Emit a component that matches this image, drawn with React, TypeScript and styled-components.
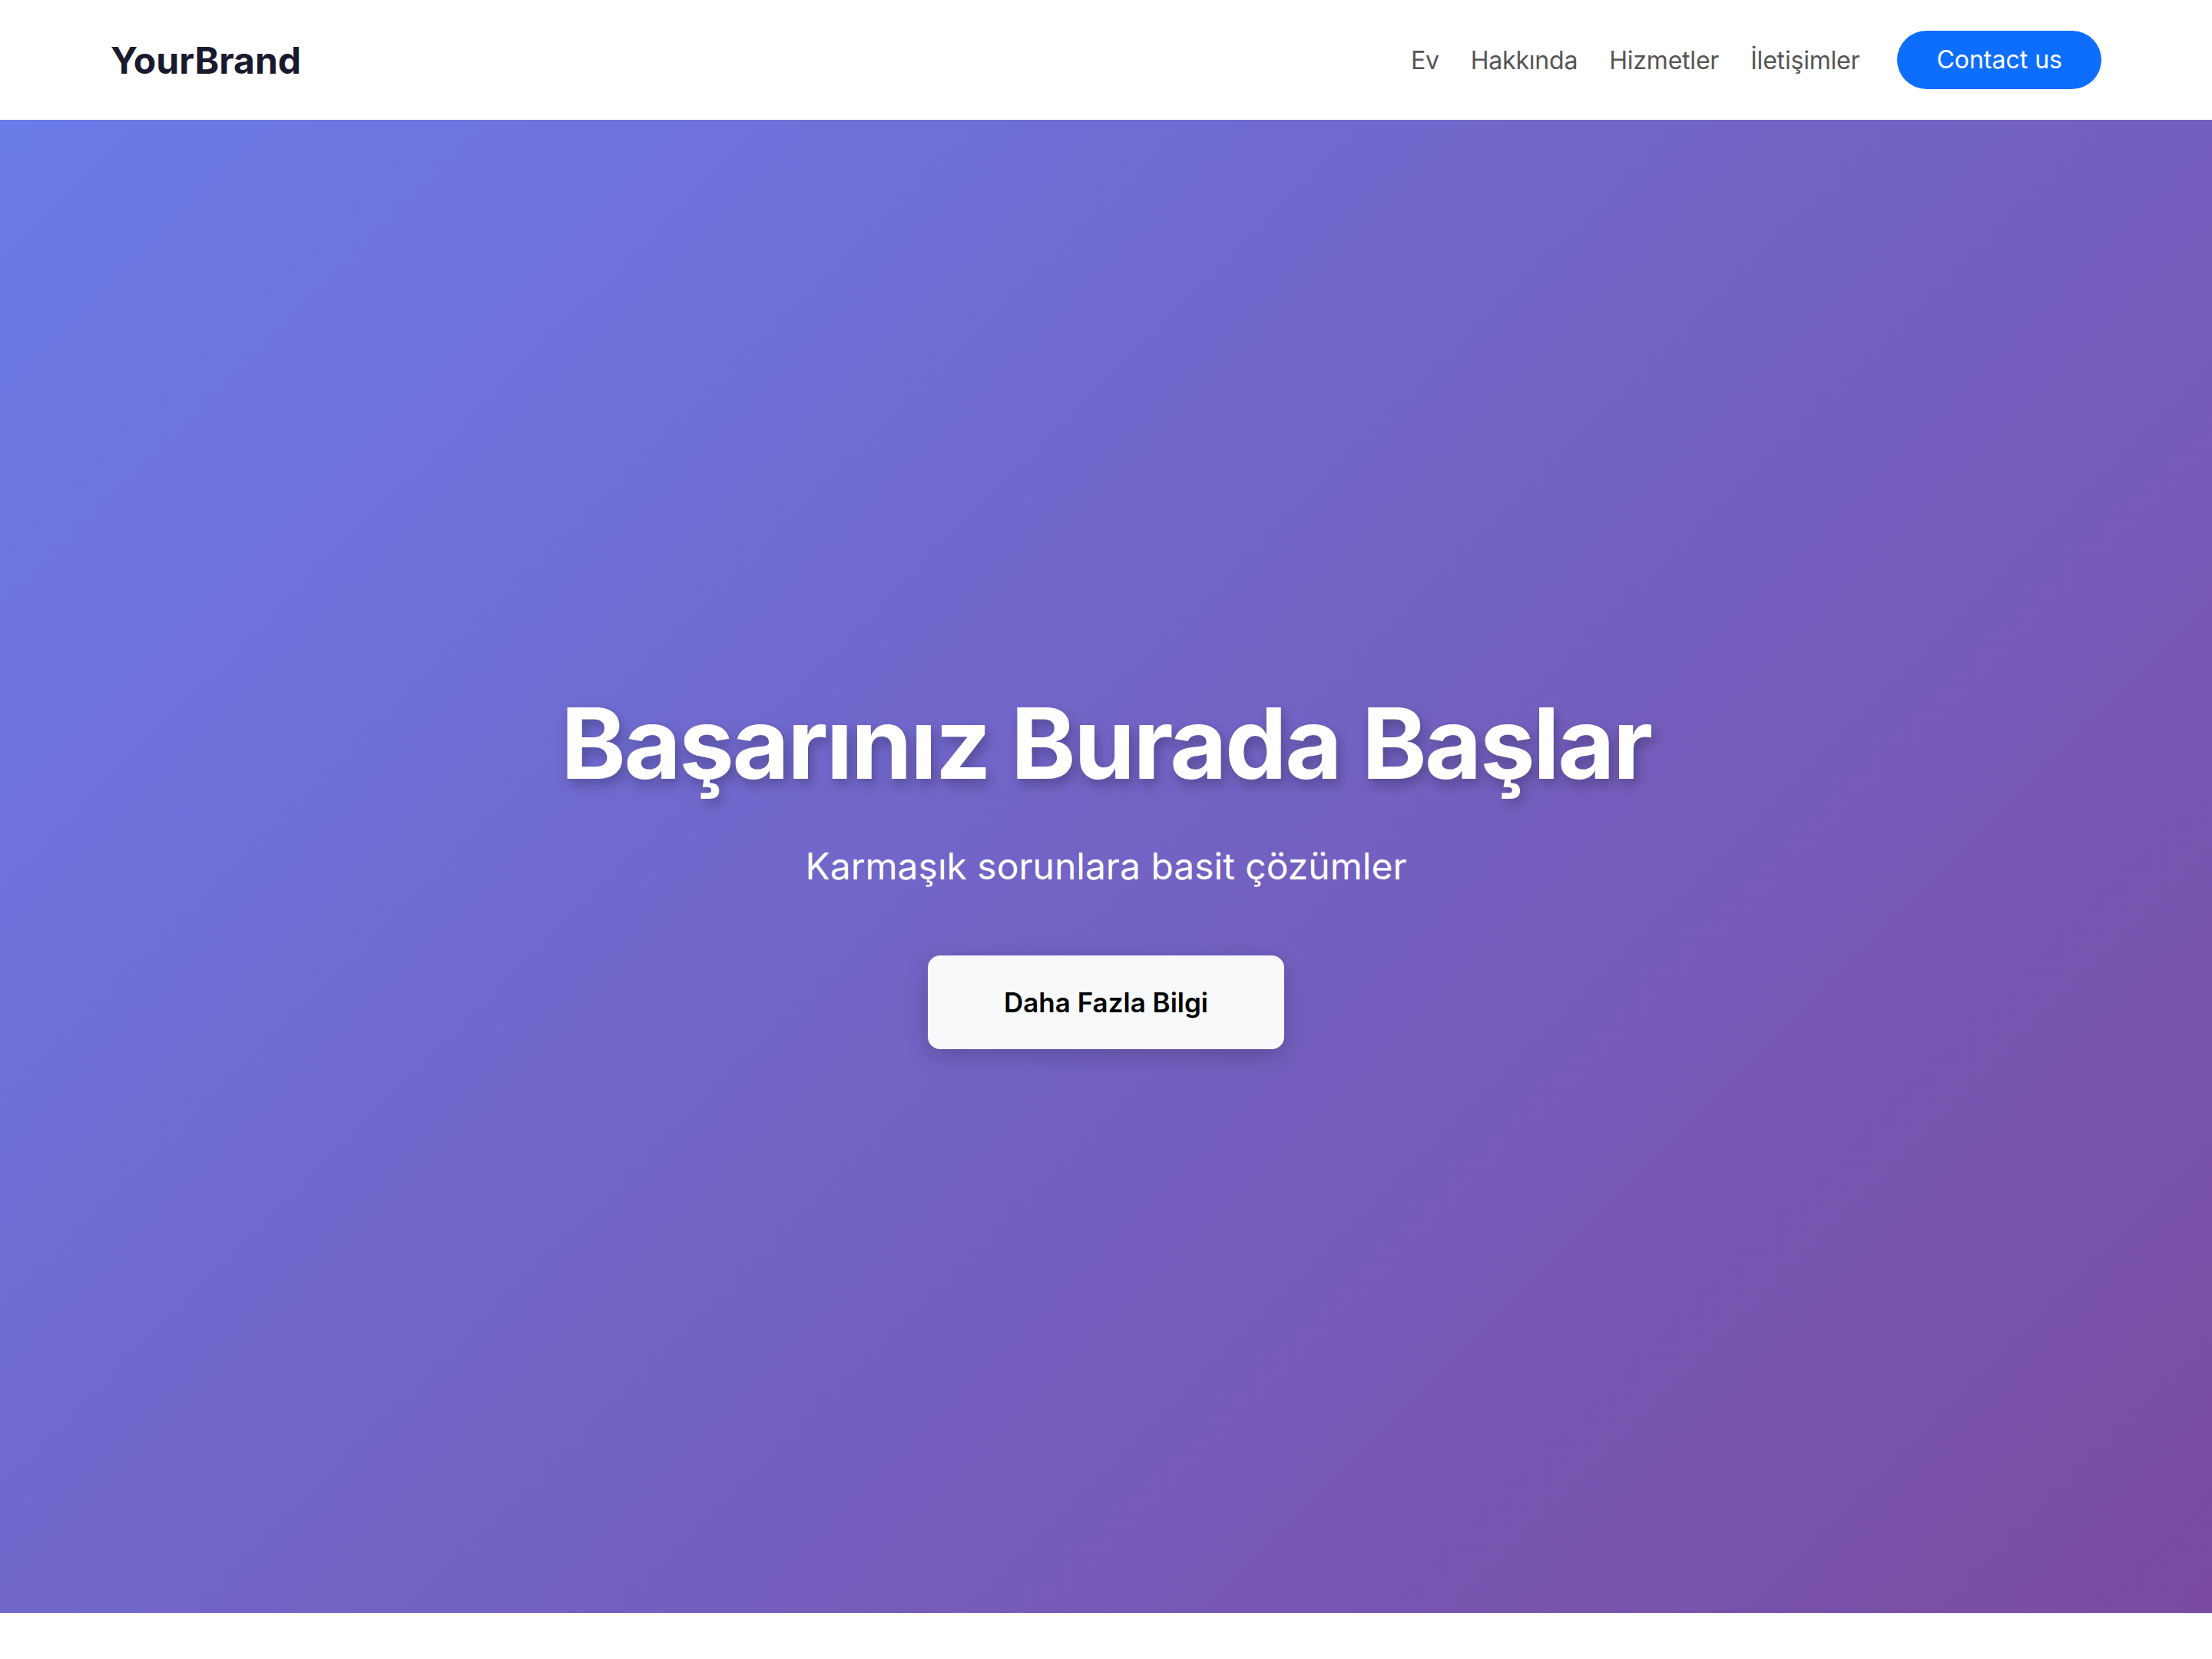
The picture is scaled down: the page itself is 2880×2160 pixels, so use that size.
import React from "react";
import styled, { createGlobalStyle } from "styled-components";

const GlobalStyle = createGlobalStyle`
  * { box-sizing: border-box; }
  html, body { margin: 0; padding: 0; }
  body {
    font-family: Inter, "Noto Sans", "Liberation Sans", sans-serif;
    background: #ffffff;
    color: #1a1a2e;
  }
`;

const Page = styled.div`
  min-height: 100vh;
  display: flex;
  flex-direction: column;
`;

const NavBar = styled.header`
  display: flex;
  align-items: center;
  justify-content: space-between;
  padding: 40px 5%;
  background: #ffffff;
`;

const Brand = styled.div`
  font-size: 48px;
  font-weight: 700;
  color: #1a1a2e;
`;

const NavList = styled.nav`
  display: flex;
  align-items: center;
  gap: 41px;
`;

const NavLink = styled.a`
  font-size: 32px;
  color: #555555;
  letter-spacing: -0.2px;
  text-decoration: none;
`;

const ContactButton = styled.button`
  margin-left: 8px;
  font-family: inherit;
  font-size: 32px;
  line-height: 1.2;
  color: #ffffff;
  background: #0d6efd;
  border: none;
  border-radius: 100px;
  padding: 19px 51px;
  cursor: pointer;
`;

const Hero = styled.section`
  height: 90vh;
  display: flex;
  flex-direction: column;
  align-items: center;
  justify-content: center;
  text-align: center;
  color: #ffffff;
  background: linear-gradient(135deg, #6b7be8 0%, #7a4ba1 100%);
`;

const Title = styled.h1`
  margin: 0 0 48px;
  font-size: 128px;
  line-height: 1.2;
  font-weight: 700;
  letter-spacing: -2.5px;
  text-shadow: 4px 8px 16px rgba(0, 0, 0, 0.25);
`;

const Subtitle = styled.p`
  margin: 0 0 80px;
  font-size: 48px;
  line-height: 1.5;
  font-weight: 400;
`;

const LearnButton = styled.button`
  font-family: inherit;
  font-size: 35px;
  font-weight: 600;
  line-height: 1.2;
  color: #000000;
  background: #f8f9fa;
  border: none;
  border-radius: 16px;
  width: 464px;
  height: 122px;
  box-shadow: 0 8px 30px rgba(0, 0, 0, 0.2);
  cursor: pointer;
`;

export default function App() {
  return (
    <>
      <GlobalStyle />
      <Page>
        <NavBar>
          <Brand>YourBrand</Brand>
          <NavList>
            <NavLink href="#">Ev</NavLink>
            <NavLink href="#">Hakkında</NavLink>
            <NavLink href="#">Hizmetler</NavLink>
            <NavLink href="#">İletişimler</NavLink>
            <ContactButton>Contact us</ContactButton>
          </NavList>
        </NavBar>
        <Hero>
          <Title>Başarınız Burada Başlar</Title>
          <Subtitle>Karmaşık sorunlara basit çözümler</Subtitle>
          <LearnButton>Daha Fazla Bilgi</LearnButton>
        </Hero>
      </Page>
    </>
  );
}
